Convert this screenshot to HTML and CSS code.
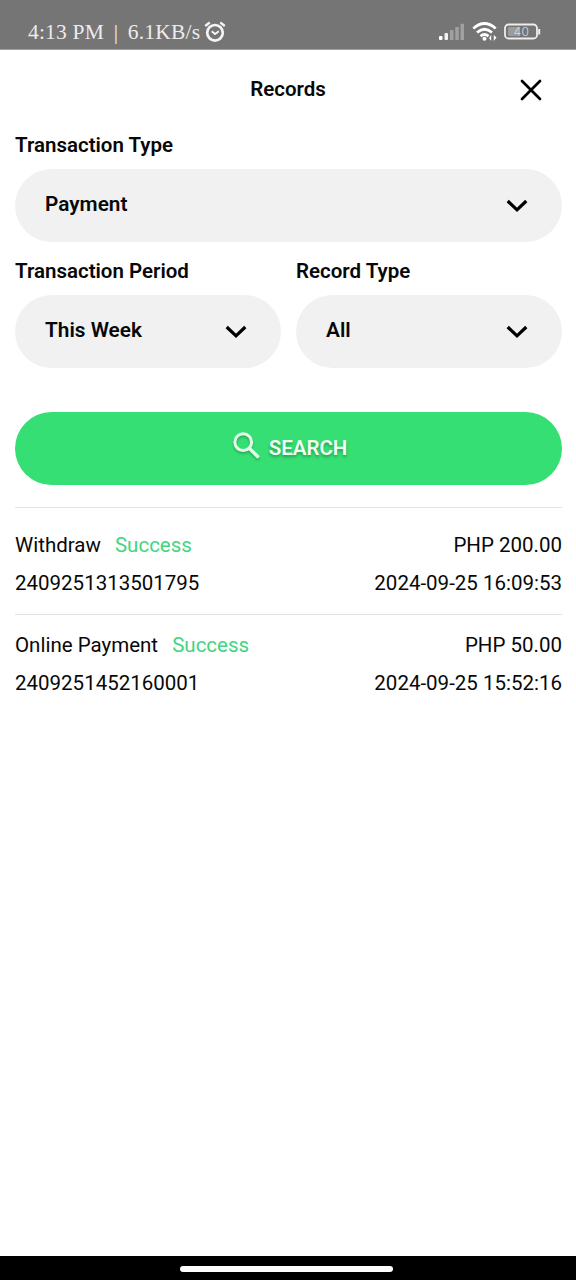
FILE: index.html
```html
<!DOCTYPE html>
<html lang="en">
<head>
<meta charset="utf-8">
<title>Records</title>
<link rel="stylesheet" href="styles.css">
</head>
<body>
<div class="status-bar">
  <span class="status-text">4:13 PM <span class="separator">|</span> 6.1KB/s</span>
  <svg class="alarm" width="22" height="22" viewBox="0 0 22 22" fill="none" stroke="#f4f4f4"><circle cx="11" cy="11.8" r="7.8" stroke-width="2.7"/><path d="M1.2 5 5.7 1.5M20.8 5 16.3 1.5" stroke-width="2.3"/><path d="M7.7 10.3 11 13l3.8-2.8" stroke-width="1.9"/></svg>
  <div class="status-icons">
    <svg width="26" height="18" viewBox="0 0 26 18"><rect x="0" y="13" width="3.5" height="4" rx="1" fill="#fff"/><rect x="5.5" y="10" width="3.5" height="7" rx="1" fill="#f2f2f2"/><path d="M11 7h3.5v10H11zM16.3 4h3.5v13h-3.5zM21.5.8H25V17h-3.5z" fill="#a0a0a0"/></svg>
    <svg class="wifi" width="26" height="20" viewBox="0 0 26 20"><path d="M1.3 6.5Q12.5-3.5 23.7 6.5M5 10.5Q12.5 4 20 10.5M8.5 14.1q4-3.2 8 0" fill="none" stroke="#fff" stroke-width="2.7"/><circle cx="12.5" cy="16.8" r="2" fill="#fff"/><path d="m17 16 2.2-3v6zM24.5 15.5 21.8 19v-6z" fill="#fff"/></svg>
    <svg class="battery" width="38" height="18" viewBox="0 0 38 18"><rect x="1" y="1.5" width="32" height="14" rx="3.6" fill="none" stroke="#eee" stroke-width="1.8"/><rect x="4" y="4" width="11" height="9" rx="1.5" fill="#9c9c9c"/><path d="M35.2 6v5.5" stroke="#eee" stroke-width="2"/><text class="battery-level" x="17.2" y="13" text-anchor="middle">40</text></svg>
  </div>
</div>
<main class="page">
  <header class="header">
    <h1 class="title">Records</h1>
    <svg class="close" width="22" height="22" viewBox="0 0 22 22"><path d="M2 2 20 20M20 2 2 20" stroke="#000" stroke-width="2.7" stroke-linecap="round"/></svg>
  </header>
  <section class="filters">
    <div class="field wide">
      <span class="label">Transaction Type</span>
      <div class="select"><span>Payment</span><svg width="22" height="14" viewBox="0 0 22 14"><path d="m1.7 2 9.3 8.8L20.3 2" fill="none" stroke="#000" stroke-width="3.2"/></svg></div>
    </div>
    <div class="field">
      <span class="label">Transaction Period</span>
      <div class="select"><span>This Week</span><svg width="22" height="14" viewBox="0 0 22 14"><path d="m1.7 2 9.3 8.8L20.3 2" fill="none" stroke="#000" stroke-width="3.2"/></svg></div>
    </div>
    <div class="field">
      <span class="label">Record Type</span>
      <div class="select"><span>All</span><svg width="22" height="14" viewBox="0 0 22 14"><path d="m1.7 2 9.3 8.8L20.3 2" fill="none" stroke="#000" stroke-width="3.2"/></svg></div>
    </div>
  </section>
  <button class="search"><svg class="search-icon" width="28" height="28" viewBox="0 0 28 28" fill="none" stroke="#e4fbe9"><circle cx="10.2" cy="10.2" r="8.4" stroke-width="3"/><path d="m16 16 9.7 9.5" stroke-width="3.5"/></svg><span>SEARCH</span></button>
  <section class="records">
    <article class="record first">
      <div class="row"><span>Withdraw <span class="success">Success</span></span><span>PHP 200.00</span></div>
      <div class="row"><span>2409251313501795</span><span>2024-09-25 16:09:53</span></div>
    </article>
    <article class="record">
      <div class="row"><span>Online Payment <span class="success">Success</span></span><span>PHP 50.00</span></div>
      <div class="row"><span>2409251452160001</span><span>2024-09-25 15:52:16</span></div>
    </article>
  </section>
</main>
<footer class="nav-bar"><div class="handle"></div></footer>
</body>
</html>
```
FILE: styles.css
```css
* { box-sizing: border-box; }
body {
  margin: 0;
  height: 1280px;
  display: flex;
  flex-direction: column;
  background: #fff;
  color: #080808;
  font-family: Roboto, sans-serif;
  font-size: 20.5px;
  overflow: hidden;
}
.status-bar {
  height: 50px;
  flex: none;
  display: flex;
  align-items: center;
  padding: 15px 34px 0 28px;
  background: #757575;
  border-bottom: 1px solid #a0a0a0;
}
.status-text {
  width: 176px;
  font-family: "Liberation Serif", serif;
  font-size: 21.5px;
  letter-spacing: .2px;
  color: #ececec;
  white-space: nowrap;
}
.separator { margin: 0 4px; }
.alarm { flex: none; }
.status-icons { display: flex; align-items: center; margin-left: auto; }
.wifi { margin-left: 7px; }
.battery { margin-left: 6px; }
.battery-level { font: 200 12.5px "DejaVu Sans Light", "DejaVu Sans", sans-serif; letter-spacing: -.5px; fill: #f0f0f0; }
.page { flex: 1; padding: 0 14px 0 15px; }
.header {
  height: 79px;
  display: grid;
  grid-template-columns: 22px 1fr 22px;
  align-items: center;
  padding: 0 20px 0 19px;
}
.title { grid-column: 2; margin: -1px 0 0; text-align: center; font-size: 20.5px; font-weight: 600; }
.filters { display: grid; grid-template-columns: 266px 266px; column-gap: 15px; }
.wide { grid-column: 1 / -1; }
.field { height: 126px; }
.field.wide { height: 125.5px; }
.label { display: block; height: 40px; line-height: 32px; font-weight: 600; }
.select {
  height: 73px;
  display: flex;
  align-items: center;
  justify-content: space-between;
  padding: 0 34px 3px 30px;
  border-radius: 37px;
  background: #f1f1f1;
  font-size: 20.8px;
  font-weight: 600;
}
.select svg { position: relative; top: 2px; }
.search {
  width: 100%;
  height: 73px;
  margin: 31.5px 0 0;
  padding: 0 0 1px 3px;
  display: flex;
  align-items: center;
  justify-content: center;
  gap: 8px;
  border: 0;
  border-radius: 37px;
  background: #35df73;
  color: #effff2;
  font: 600 20.5px Roboto, sans-serif;
  text-shadow: 0 2px 3px rgba(0, 0, 0, .3);
}
.search-icon { margin-bottom: 4px; filter: drop-shadow(0 2px 1px rgba(0, 0, 0, .22)); }
.records { margin-top: 22px; }
.record { height: 99px; padding-top: 11px; border-top: 1.5px solid #e2e2e2; }
.record.first { height: 107px; padding-top: 18px; }
.row { display: flex; justify-content: space-between; height: 38px; line-height: 38px; }
.success { margin-left: 9px; color: #43d581; }
.nav-bar { height: 24px; flex: none; background: #000; display: flex; justify-content: center; padding-top: 10px; }
.handle { width: 213px; height: 6px; margin-right: 4px; border-radius: 3px; background: #fff; }
```
